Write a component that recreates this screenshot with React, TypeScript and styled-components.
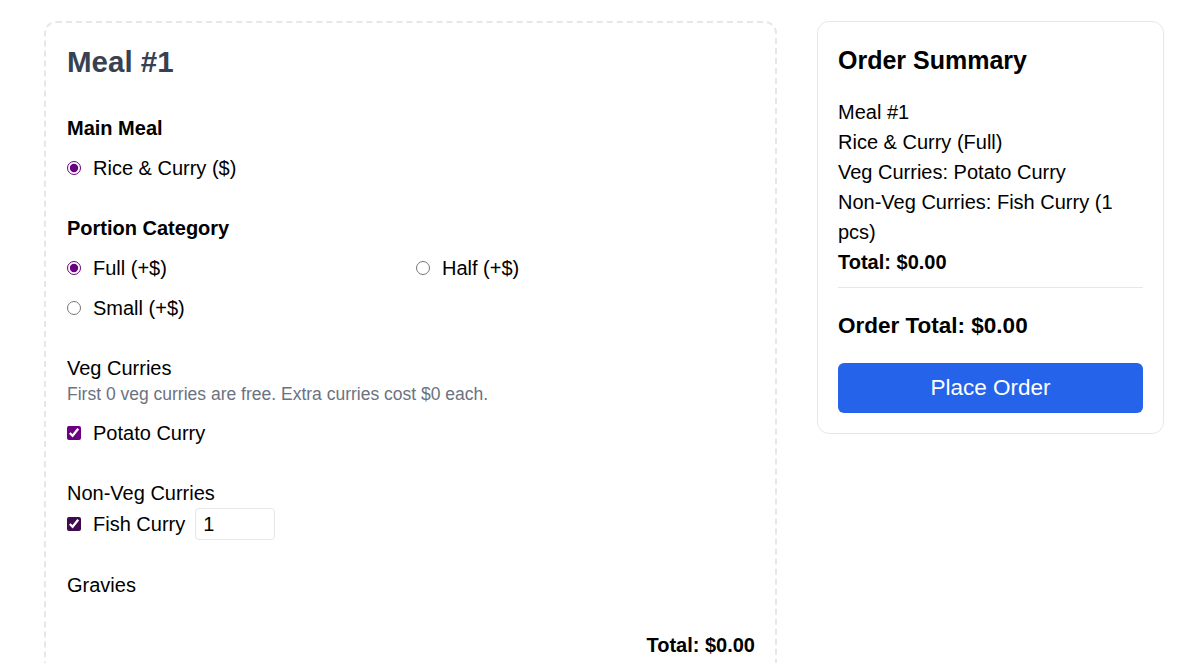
import React from "react";
import styled, { createGlobalStyle } from "styled-components";

const GlobalStyle = createGlobalStyle`
  * { box-sizing: border-box; }
  html, body { margin: 0; padding: 0; background: #ffffff; }
  body {
    font-family: "Liberation Sans", Arial, sans-serif;
    color: #000000;
    overflow: hidden;
  }
`;

const Page = styled.div`
  display: flex;
  align-items: flex-start;
  gap: 40px;
  padding: 21px 16px 0 44px;
`;

const MealCard = styled.section`
  width: 733px;
  flex: none;
  border: 2px dashed #e5e7eb;
  border-radius: 12px;
  padding: 22px 20px 40px 21px;
`;

const MealTitle = styled.h2`
  margin: 0 0 37px;
  font-size: 29.5px;
  line-height: 34px;
  font-weight: 700;
  color: #374151;
`;

const Section = styled.div<{ $gapAfter?: number }>`
  margin-bottom: ${(p) => (p.$gapAfter ?? 36)}px;
`;

const SectionHeading = styled.div<{ $bold?: boolean; $mb?: number }>`
  font-size: 20px;
  line-height: 24px;
  font-weight: ${(p) => (p.$bold ? 700 : 400)};
  margin-bottom: ${(p) => p.$mb ?? 16}px;
`;

const Note = styled.div`
  font-size: 17.5px;
  line-height: 22px;
  color: #6b7280;
  margin-bottom: 16px;
`;

const OptionGrid = styled.div<{ $cols: number }>`
  display: grid;
  grid-template-columns: repeat(${(p) => p.$cols}, 1fr);
  column-gap: 10px;
  row-gap: 16px;
`;

const OptionLabel = styled.label`
  display: flex;
  align-items: center;
  gap: 12px;
  height: 24px;
  font-size: 20px;
  line-height: 24px;
  cursor: pointer;
`;

const Radio = styled.input.attrs({ type: "radio" })`
  margin: 0;
  width: 14px;
  height: 14px;
  accent-color: #6b0080;
`;

const Check = styled.input.attrs({ type: "checkbox" })<{ $tone?: string }>`
  margin: 0;
  width: 14px;
  height: 14px;
  accent-color: ${(p) => p.$tone ?? "#6b0080"};
`;

const QtyRow = styled.div`
  display: flex;
  align-items: center;
  gap: 12px;
  height: 32px;
  font-size: 20px;
`;

const QtyInput = styled.input`
  width: 80px;
  height: 32px;
  margin-left: -2px;
  border: 1px solid #e5e7eb;
  border-radius: 4px;
  padding: 0 7px;
  font-family: "Liberation Sans", Arial, sans-serif;
  font-size: 20px;
  color: #000;
  outline: none;
`;

const MealTotal = styled.div`
  text-align: right;
  font-size: 20px;
  line-height: 24px;
  font-weight: 700;
`;

const SummaryCard = styled.aside`
  width: 347px;
  flex: none;
  border: 1px solid #e5e7eb;
  border-radius: 12px;
  padding: 21px 20px 20px;
`;

const SummaryTitle = styled.h3`
  margin: 0 0 20px;
  font-size: 25px;
  line-height: 34px;
  font-weight: 700;
`;

const SummaryLine = styled.div<{ $bold?: boolean }>`
  font-size: 20px;
  line-height: 30px;
  font-weight: ${(p) => (p.$bold ? 700 : 400)};
`;

const Divider = styled.hr`
  border: 0;
  border-top: 1px solid #e5e7eb;
  margin: 10px 0 0;
`;

const OrderTotal = styled.div`
  padding-top: 25px;
  font-size: 22.5px;
  line-height: 26px;
  font-weight: 700;
  margin-bottom: 24px;
`;

const PlaceButton = styled.button`
  display: block;
  width: 100%;
  height: 50px;
  border: 0;
  border-radius: 6px;
  background: #2563eb;
  color: #ffffff;
  font-family: "Liberation Sans", Arial, sans-serif;
  font-size: 22.5px;
  cursor: pointer;
`;

export default function App() {
  return (
    <>
      <GlobalStyle />
      <Page>
        <MealCard>
          <MealTitle>Meal #1</MealTitle>

          <Section>
            <SectionHeading $bold>Main Meal</SectionHeading>
            <OptionGrid $cols={1}>
              <OptionLabel>
                <Radio name="main" defaultChecked />
                Rice &amp; Curry ($)
              </OptionLabel>
            </OptionGrid>
          </Section>

          <Section>
            <SectionHeading $bold>Portion Category</SectionHeading>
            <OptionGrid $cols={2}>
              <OptionLabel>
                <Radio name="portion" defaultChecked />
                Full (+$)
              </OptionLabel>
              <OptionLabel>
                <Radio name="portion" />
                Half (+$)
              </OptionLabel>
              <OptionLabel>
                <Radio name="portion" />
                Small (+$)
              </OptionLabel>
            </OptionGrid>
          </Section>

          <Section>
            <SectionHeading $mb={3}>Veg Curries</SectionHeading>
            <Note>First 0 veg curries are free. Extra curries cost $0 each.</Note>
            <OptionLabel>
              <Check defaultChecked />
              Potato Curry
            </OptionLabel>
          </Section>

          <Section $gapAfter={33}>
            <SectionHeading $mb={3}>Non-Veg Curries</SectionHeading>
            <QtyRow>
              <Check defaultChecked $tone="#3f0a4f" />
              Fish Curry
              <QtyInput type="number" defaultValue={1} />
            </QtyRow>
          </Section>

          <Section>
            <SectionHeading $mb={0}>Gravies</SectionHeading>
          </Section>

          <MealTotal>Total: $0.00</MealTotal>
        </MealCard>

        <SummaryCard>
          <SummaryTitle>Order Summary</SummaryTitle>
          <SummaryLine>Meal #1</SummaryLine>
          <SummaryLine>Rice &amp; Curry (Full)</SummaryLine>
          <SummaryLine>Veg Curries: Potato Curry</SummaryLine>
          <SummaryLine>Non-Veg Curries: Fish Curry (1 pcs)</SummaryLine>
          <SummaryLine $bold>Total: $0.00</SummaryLine>
          <Divider />
          <OrderTotal>Order Total: $0.00</OrderTotal>
          <PlaceButton>Place Order</PlaceButton>
        </SummaryCard>
      </Page>
    </>
  );
}
